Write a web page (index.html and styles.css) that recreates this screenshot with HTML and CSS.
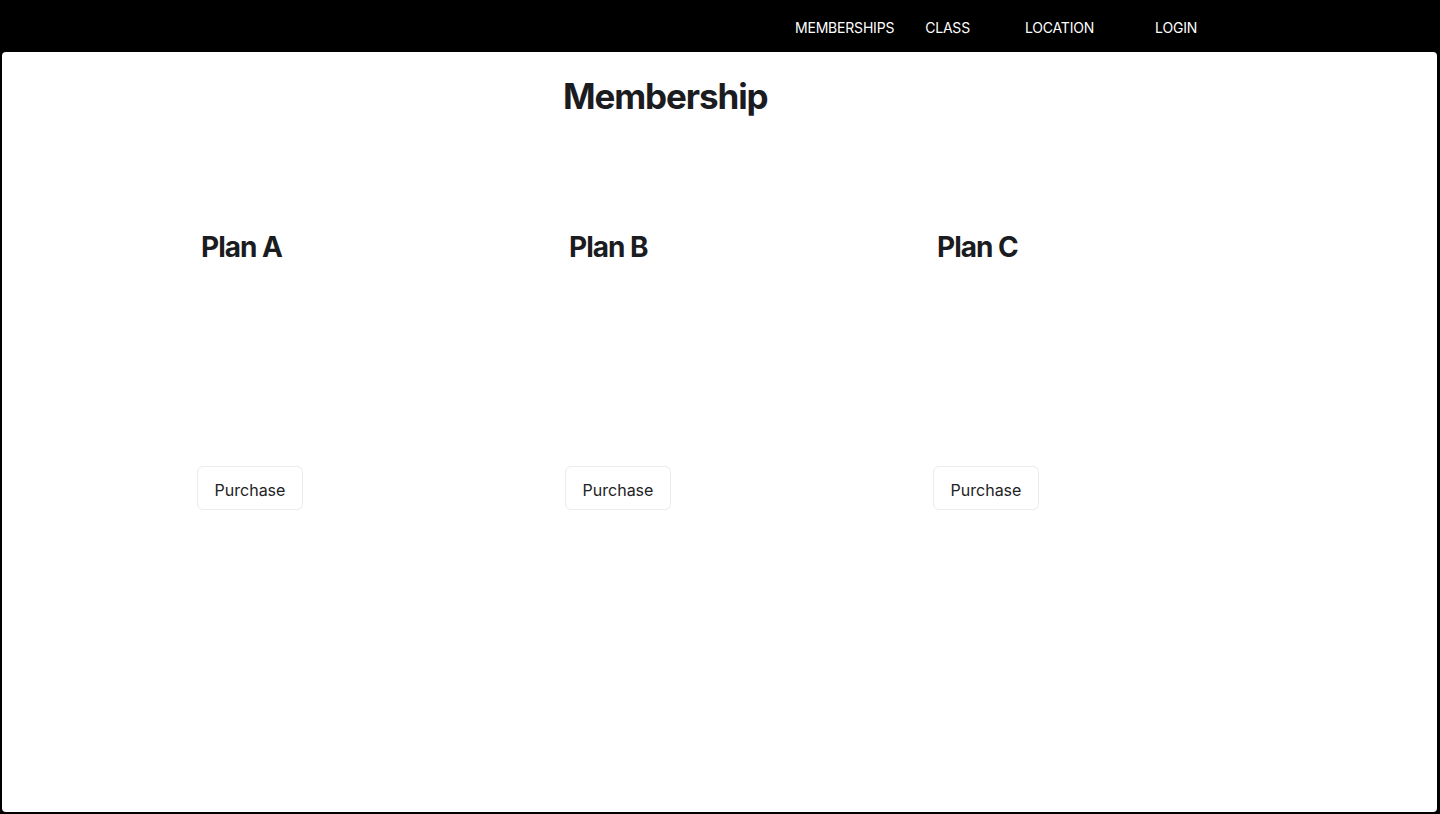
FILE: index.html
```html
<!DOCTYPE html>
<html lang="en">
<head>
<meta charset="UTF-8">
<meta name="viewport" content="width=device-width, initial-scale=1.0">
<title>Membership</title>
<link rel="stylesheet" href="styles.css">
</head>
<body>

<header class="topbar">
    <nav class="nav">
        <a href="#" class="nav-link nav-memberships">MEMBERSHIPS</a>
        <a href="#" class="nav-link nav-class">CLASS</a>
        <a href="#" class="nav-link nav-location">LOCATION</a>
        <a href="#" class="nav-link nav-login">LOGIN</a>
    </nav>
</header>

<main class="panel">
    <h1 class="page-title">Membership</h1>

    <div class="plans">
        <div class="plan">
            <h2 class="plan-name">Plan A</h2>
            <button class="purchase-btn">Purchase</button>
        </div>
        <div class="plan">
            <h2 class="plan-name">Plan B</h2>
            <button class="purchase-btn">Purchase</button>
        </div>
        <div class="plan">
            <h2 class="plan-name">Plan C</h2>
            <button class="purchase-btn">Purchase</button>
        </div>
    </div>
</main>

</body>
</html>
```

FILE: styles.css
```css
/* Estilos */
html, body {
    height: 100%;
}
body {
    margin: 0;
    background-color: #000;
    font-family: Inter, "Noto Sans", Arial, sans-serif;
    display: flex;
    flex-direction: column;
}
.topbar {
    height: 52px;
    flex-shrink: 0;
}
.nav {
    display: flex;
    align-items: center;
    height: 100%;
    padding-left: 795px;
}
.nav-link {
    color: #fff;
    text-decoration: none;
    font-size: 14px;
    letter-spacing: -0.2px;
    line-height: 52px;
    padding-top: 3px;
}
.nav-class {
    margin-left: 31px;
}
.nav-location {
    margin-left: 55px;
}
.nav-login {
    margin-left: 61px;
}
.panel {
    background-color: #fff;
    margin: 0 3px 2px 2px;
    border-radius: 4px;
    flex: 1;
}
.page-title {
    margin: 0;
    padding-top: 23px;
    padding-left: 561px;
    font-size: 35px;
    line-height: 42px;
    font-weight: 700;
    letter-spacing: -1.1px;
    color: #1b1c1f;
}
.plans {
    display: grid;
    grid-template-columns: 368px 368px 368px;
    padding-left: 195px;
    margin-top: 112px;
}
.plan-name {
    margin: 0 0 0 4px;
    font-size: 28px;
    line-height: 36px;
    font-weight: 700;
    letter-spacing: -1px;
    color: #1b1c1f;
}
.purchase-btn {
    margin-top: 201px;
    width: 106px;
    height: 44px;
    background-color: #fff;
    border: 1px solid #ececec;
    border-radius: 6px;
    font-family: Inter, "Noto Sans", Arial, sans-serif;
    font-size: 16px;
    color: #212225;
    cursor: pointer;
    padding: 4px 0 0;
}
```
